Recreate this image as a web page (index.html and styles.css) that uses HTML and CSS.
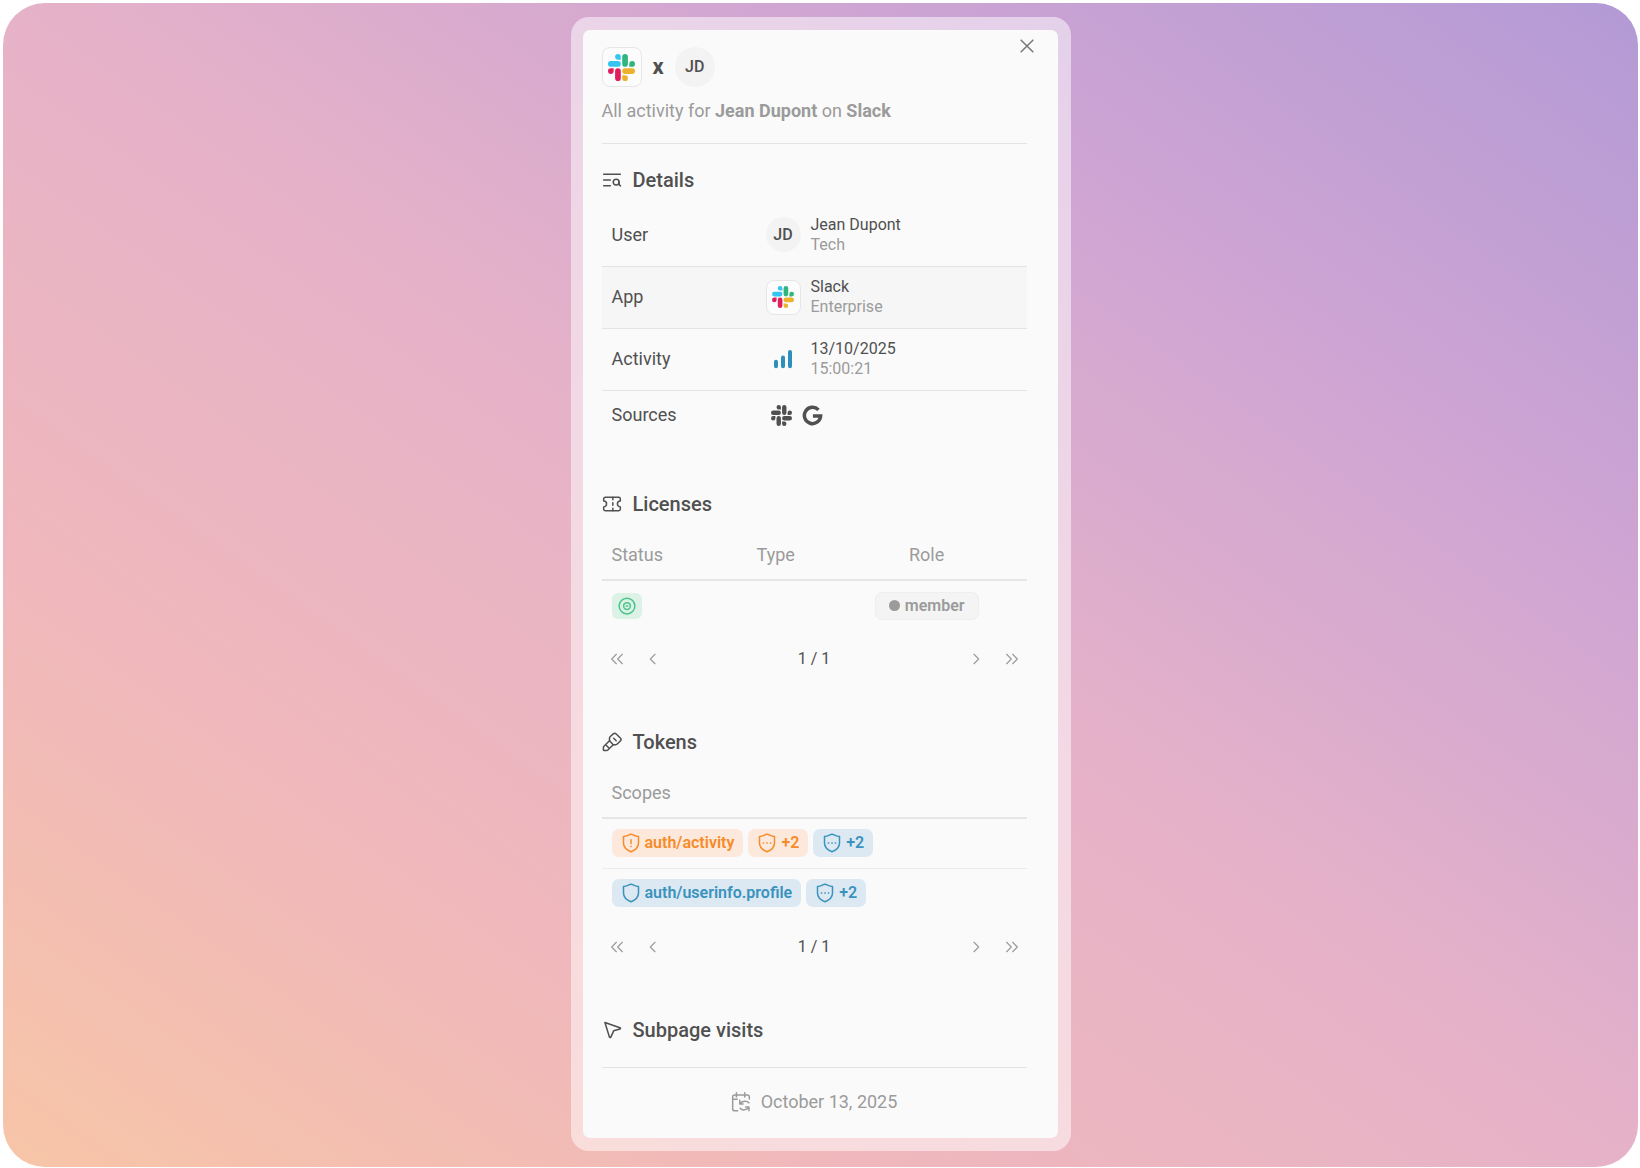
FILE: index.html
```html
<!DOCTYPE html>
<html lang="en">
<head>
    <meta charset="UTF-8">
    <meta name="viewport" content="width=device-width, initial-scale=1.0">
    <title>Jean Dupont on Slack</title>
    <link rel="stylesheet" href="styles.css">
</head>
<body>
    <!-- shared icons -->
    <svg class="sprite" aria-hidden="true">
        <symbol id="slack" viewBox="0 0 24 24">
            <path class="slack-red" d="M5.042 15.165a2.528 2.528 0 0 1-2.52 2.523A2.528 2.528 0 0 1 0 15.165a2.527 2.527 0 0 1 2.522-2.52h2.52v2.52zM6.313 15.165a2.527 2.527 0 0 1 2.521-2.52 2.527 2.527 0 0 1 2.521 2.52v6.313A2.528 2.528 0 0 1 8.834 24a2.528 2.528 0 0 1-2.521-2.522v-6.313z"/>
            <path class="slack-blue" d="M8.834 5.042a2.528 2.528 0 0 1-2.521-2.52A2.528 2.528 0 0 1 8.834 0a2.528 2.528 0 0 1 2.521 2.522v2.52H8.834zM8.834 6.313a2.528 2.528 0 0 1 2.521 2.521 2.528 2.528 0 0 1-2.521 2.521H2.522A2.528 2.528 0 0 1 0 8.834a2.528 2.528 0 0 1 2.522-2.521h6.312z"/>
            <path class="slack-green" d="M18.956 8.834a2.528 2.528 0 0 1 2.522-2.521A2.528 2.528 0 0 1 24 8.834a2.528 2.528 0 0 1-2.522 2.521h-2.522V8.834zM17.688 8.834a2.528 2.528 0 0 1-2.523 2.521 2.527 2.527 0 0 1-2.52-2.521V2.522A2.527 2.527 0 0 1 15.165 0a2.528 2.528 0 0 1 2.523 2.522v6.312z"/>
            <path class="slack-yellow" d="M15.165 18.956a2.528 2.528 0 0 1 2.523 2.522A2.528 2.528 0 0 1 15.165 24a2.527 2.527 0 0 1-2.52-2.522v-2.522h2.52zM15.165 17.688a2.527 2.527 0 0 1-2.52-2.523 2.526 2.526 0 0 1 2.52-2.52h6.313A2.527 2.527 0 0 1 24 15.165a2.528 2.528 0 0 1-2.522 2.523h-6.313z"/>
        </symbol>
        <symbol id="shield" viewBox="0 0 24 24">
            <path d="M12 1.500c-2.600 0-3.900 2.200-9 2.700V12c0 5 3.400 8.300 9 10.500 5.600-2.200 9-5.500 9-10.500V4.200C15.900 3.700 14.600 1.500 12 1.500z"/>
        </symbol>
        <symbol id="shield-more" viewBox="0 0 24 24">
            <use href="#shield"/>
            <path d="M7.500 12h.5M11.800 12h.5M16 12h.5"/>
        </symbol>
        <symbol id="shield-alert" viewBox="0 0 24 24">
            <use href="#shield"/>
            <path d="M12 8v4.500M12 16v.3"/>
        </symbol>
        <symbol id="first" viewBox="0 0 24 24">
            <path d="M11 5l-7 7 7 7M20 5l-7 7 7 7"/>
        </symbol>
        <symbol id="prev" viewBox="0 0 24 24">
            <path d="M15 5l-7 7 7 7"/>
        </symbol>
        <symbol id="next" viewBox="0 0 24 24">
            <path d="M9 5l7 7-7 7"/>
        </symbol>
        <symbol id="last" viewBox="0 0 24 24">
            <path d="M4 5l7 7-7 7M13 5l7 7-7 7"/>
        </symbol>
    </svg>

    <main class="stage">
        <div class="frame">
            <div class="panel">
                <button type="button" class="close" aria-label="Close">
                    <svg class="icon" viewBox="0 0 24 24"><path d="M5 5l14 14M19 5L5 19"/></svg>
                </button>

                <header class="header">
                    <div class="pair">
                        <span class="app-icon"><svg><use href="#slack"/></svg></span>
                        <span class="times">x</span>
                        <span class="avatar">JD</span>
                    </div>
                    <p class="subtitle">All activity for <b>Jean Dupont</b> on <b>Slack</b></p>
                </header>

                <section class="section">
                    <h2>
                        <svg class="icon" viewBox="0 0 24 24"><path d="M2 5h20M2 12h8M2 19h8"/><circle cx="17" cy="14.500" r="3.500"/><path d="M20.500 14.500V17.500l1.700 1.500"/></svg>
                        Details
                    </h2>
                    <table class="details">
                        <tr>
                            <th scope="row">User</th>
                            <td>
                                <div class="value">
                                    <span class="avatar small">JD</span>
                                    <div class="lines">Jean Dupont<small>Tech</small></div>
                                </div>
                            </td>
                        </tr>
                        <tr class="shaded">
                            <th scope="row">App</th>
                            <td>
                                <div class="value">
                                    <span class="app-icon small"><svg><use href="#slack"/></svg></span>
                                    <div class="lines">Slack<small>Enterprise</small></div>
                                </div>
                            </td>
                        </tr>
                        <tr>
                            <th scope="row">Activity</th>
                            <td>
                                <div class="value">
                                    <span class="activity"><svg viewBox="0 0 20 20"><path d="M3 12.800v4.400M10 8.500v8.700M17 3v14.200"/></svg></span>
                                    <div class="lines">13/10/2025<small>15:00:21</small></div>
                                </div>
                            </td>
                        </tr>
                        <tr>
                            <th scope="row">Sources</th>
                            <td>
                                <div class="sources">
                                    <svg><use href="#slack"/></svg>
                                    <svg class="google" viewBox="0 0 24 24"><path d="M18.800 5.600A9.300 9.300 0 1 0 21.300 12.500H12.500"/></svg>
                                </div>
                            </td>
                        </tr>
                    </table>
                </section>

                <section class="section">
                    <h2>
                        <svg class="icon" viewBox="0 0 24 24"><path d="M4 4h16a2 2 0 0 1 2 2v2.500a3.500 3.500 0 0 0 0 7V18a2 2 0 0 1-2 2H4a2 2 0 0 1-2-2v-2.500a3.500 3.500 0 0 0 0-7V6a2 2 0 0 1 2-2z"/><path d="M13 4v3M13 10.500v3M13 17v3"/></svg>
                        Licenses
                    </h2>
                    <table class="grid licenses">
                        <thead>
                            <tr><th>Status</th><th>Type</th><th>Role</th></tr>
                        </thead>
                        <tbody>
                            <tr>
                                <td>
                                    <span class="status"><svg class="icon" viewBox="0 0 24 24"><circle cx="12" cy="12" r="10.500"/><circle cx="12" cy="12" r="4.500"/><path d="M11 12h2"/></svg></span>
                                </td>
                                <td></td>
                                <td><span class="role"><i></i>member</span></td>
                            </tr>
                        </tbody>
                    </table>
                    <nav class="pager">
                        <button type="button" aria-label="First page"><svg class="icon"><use href="#first"/></svg></button>
                        <button type="button" aria-label="Previous page"><svg class="icon"><use href="#prev"/></svg></button>
                        <span>1 / 1</span>
                        <button type="button" aria-label="Next page"><svg class="icon"><use href="#next"/></svg></button>
                        <button type="button" aria-label="Last page"><svg class="icon"><use href="#last"/></svg></button>
                    </nav>
                </section>

                <section class="section">
                    <h2>
                        <svg class="icon" viewBox="0 0 24 24"><path d="M13.500 2.300a2.500 2.500 0 0 1 3.500 0l5 5a2.500 2.500 0 0 1 0 3.500l-3.700 3.700a2.500 2.500 0 0 1-1.800.7h-3L7 21.700a2 2 0 0 1-1.400.6H2.700a1 1 0 0 1-1-1v-2.800a2 2 0 0 1 .6-1.400L9 10.500v-3a2.500 2.500 0 0 1 .7-1.800z"/><path d="M14 7.500l3 3M9 10.500l4.500 4.700M5 16l3 3"/></svg>
                        Tokens
                    </h2>
                    <table class="grid tokens">
                        <thead>
                            <tr><th>Scopes</th></tr>
                        </thead>
                        <tbody>
                            <tr>
                                <td>
                                    <div class="chips">
                                        <span class="chip orange"><svg class="icon"><use href="#shield-alert"/></svg>auth/activity</span>
                                        <span class="chip orange"><svg class="icon"><use href="#shield-more"/></svg>+2</span>
                                        <span class="chip blue"><svg class="icon"><use href="#shield-more"/></svg>+2</span>
                                    </div>
                                </td>
                            </tr>
                            <tr>
                                <td>
                                    <div class="chips">
                                        <span class="chip blue"><svg class="icon"><use href="#shield"/></svg>auth/userinfo.profile</span>
                                        <span class="chip blue"><svg class="icon"><use href="#shield-more"/></svg>+2</span>
                                    </div>
                                </td>
                            </tr>
                        </tbody>
                    </table>
                    <nav class="pager">
                        <button type="button" aria-label="First page"><svg class="icon"><use href="#first"/></svg></button>
                        <button type="button" aria-label="Previous page"><svg class="icon"><use href="#prev"/></svg></button>
                        <span>1 / 1</span>
                        <button type="button" aria-label="Next page"><svg class="icon"><use href="#next"/></svg></button>
                        <button type="button" aria-label="Last page"><svg class="icon"><use href="#last"/></svg></button>
                    </nav>
                </section>

                <section class="section">
                    <h2>
                        <svg class="icon" viewBox="0 0 24 24"><path d="M3.500 3l18 6.200c.9.300.9 1.400 0 1.700L14 13l-3.400 7.500c-.4.800-1.400.8-1.700-.1z"/></svg>
                        Subpage visits
                    </h2>
                </section>

                <footer class="footer">
                    <svg class="icon" viewBox="0 0 24 24"><path d="M6.500 1v5M16.500 1v5M22 8.500V6a2.500 2.500 0 0 0-2.500-2.500h-15A2.500 2.500 0 0 0 2 6v14a2.500 2.500 0 0 0 2.500 2.500H8M2 8.800h5.500M10.500 10v4.500h4M11 14c2-3.500 8-4 10.500-1M21.500 22.500V18h-4M21 18.500c-2 3.500-7.500 4-10 1"/></svg>
                    October 13, 2025
                </footer>
            </div>
        </div>
    </main>
</body>
</html>
```
FILE: styles.css
```css
body {
    margin: 0;
    padding: 3px 2px 1px 3px;
    background-color: #ffffff;
    font-family: Roboto, "Liberation Sans", sans-serif;
    font-size: 18px;
    line-height: 24px;
    color: #505050;
}

* {
    box-sizing: border-box;
}

.sprite {
    display: none;
}

.stage {
    display: flex;
    justify-content: center;
    align-items: flex-start;
    min-height: calc(100vh - 4px);
    padding: 14px 16px 16px;
    border-radius: 42px;
    background: linear-gradient(to top right, #f7c5a7 0%, #f0b8bb 25%, #e6b2c8 50%, #cfa5d3 75%, #b39ad5 100%);
}

.frame {
    width: 100%;
    max-width: 500px;
    padding: 13px 13px 13px 12px;
    border-radius: 18px;
    background-color: rgba(255, 255, 255, 0.5);
}

.panel {
    position: relative;
    padding: 17px 31px 24px 19px;
    border-radius: 7px;
    background-color: #fafafa;
}

.icon {
    width: 20px;
    height: 20px;
    flex: none;
    fill: none;
    stroke: currentColor;
    stroke-width: 1.8;
    stroke-linecap: round;
    stroke-linejoin: round;
}

button {
    display: flex;
    align-items: center;
    justify-content: center;
    padding: 0;
    border: none;
    background: none;
    color: inherit;
    cursor: pointer;
}

.close {
    position: absolute;
    top: 6px;
    right: 21px;
    width: 20px;
    height: 20px;
    color: #777777;
}

/* header */
.header {
    border-bottom: 1px solid #e4e4e4;
    padding-bottom: 20px;
}

.pair {
    display: flex;
    align-items: center;
    gap: 11px;
}

.times {
    font-size: 22px;
    font-weight: bold;
}

.app-icon,
.avatar,
.activity {
    display: flex;
    align-items: center;
    justify-content: center;
    flex: none;
    width: 40px;
    height: 40px;
}

.app-icon {
    border: 1px solid #e6e6e6;
    border-radius: 8px;
    background-color: #fcfcfc;
}

.app-icon svg {
    width: 27px;
    height: 27px;
}

.slack-red { fill: var(--red, #e01e5a); }
.slack-blue { fill: var(--blue, #36c5f0); }
.slack-green { fill: var(--green, #2eb67d); }
.slack-yellow { fill: var(--yellow, #ecb22e); }

.avatar {
    border-radius: 50%;
    background-color: #f3f3f3;
    font-size: 16px;
    font-weight: 500;
}

.activity,
.small {
    width: 35px;
    height: 35px;
}

.small svg {
    width: 22px;
    height: 22px;
}

.activity svg {
    width: 20px;
    height: 20px;
    stroke: #2f8fbc;
    stroke-width: 4;
    stroke-linecap: round;
}

.subtitle {
    margin: 12px 0 0;
    color: #9b9b9b;
}

/* sections */
.section {
    margin-bottom: 52px;
}

.section:last-of-type {
    margin-bottom: 11px;
}

h2 {
    display: flex;
    align-items: center;
    gap: 11px;
    margin: 0;
    padding: 24px 0 12px;
    font-size: 20px;
    font-weight: 500;
    line-height: 24px;
}

.section + .section h2 {
    padding: 0 0 14px;
}

table {
    width: 100%;
    border-collapse: collapse;
    table-layout: fixed;
}

th {
    padding: 0 10px;
    font-weight: normal;
    text-align: left;
}

td {
    padding: 0 10px;
}

.details tr {
    height: 62px;
    border-bottom: 1px solid #e4e4e4;
}

.details tr:last-child {
    height: 50px;
    border-bottom: none;
}

.details th {
    width: 154px;
}

.shaded {
    background-color: #f6f6f6;
}

.value {
    display: flex;
    align-items: center;
    gap: 10px;
}

.lines {
    font-size: 16px;
    line-height: 20px;
}

.lines small {
    display: block;
    font-size: 16px;
    color: #9b9b9b;
}

.sources {
    display: flex;
    gap: 10px;
    padding-left: 5px;
    --red: #505050;
    --blue: #505050;
    --green: #505050;
    --yellow: #505050;
}

.sources svg {
    width: 21px;
    height: 21px;
}

.google path {
    fill: none;
    stroke: #505050;
    stroke-width: 4;
}

.grid th {
    height: 50px;
    border-bottom: 2px solid #e6e6e6;
    color: #9b9b9b;
}

.grid td {
    height: 50px;
}

.grid tr + tr {
    border-top: 1px solid #ececec;
}

.licenses th:first-child {
    width: 29%;
}

.licenses th:nth-child(2) {
    width: 24%;
}

.licenses th + th,
.licenses td + td {
    text-align: center;
}

.status {
    display: flex;
    align-items: center;
    justify-content: center;
    width: 30px;
    height: 26px;
    border-radius: 6px;
    background-color: #dcf2e6;
    color: #4cc38a;
}

.status .icon {
    width: 18px;
    height: 18px;
    stroke-width: 2;
}

.role,
.chip {
    display: inline-flex;
    align-items: center;
    height: 28px;
    border-radius: 7px;
    font-size: 16px;
    font-weight: 600;
}

.role {
    gap: 5px;
    padding: 0 13px;
    border: 1px solid #eeeeee;
    background-color: #f4f4f4;
    color: #9b9b9b;
}

.role i {
    width: 11px;
    height: 11px;
    border-radius: 50%;
    background-color: #9b9b9b;
}

.chips {
    display: flex;
    gap: 5px;
}

.chip {
    gap: 4px;
    padding: 0 9px;
}

.orange {
    background-color: #fde8dc;
    color: #f68b28;
}

.blue {
    background-color: #dce9f2;
    color: #3a93be;
}

/* pagination */
.pager {
    display: flex;
    align-items: center;
    gap: 16px;
    height: 38px;
    margin-top: 10px;
    padding: 0 5px;
    font-size: 16px;
}

.pager span {
    flex: 1;
    text-align: center;
}

.pager button {
    width: 20px;
    height: 20px;
    color: #a0a0a0;
}

.pager .icon {
    width: 16px;
    height: 16px;
    stroke-width: 2;
}

.footer {
    display: flex;
    align-items: center;
    justify-content: center;
    gap: 10px;
    padding-top: 22px;
    border-top: 1px solid #e4e4e4;
    color: #9b9b9b;
}
```
